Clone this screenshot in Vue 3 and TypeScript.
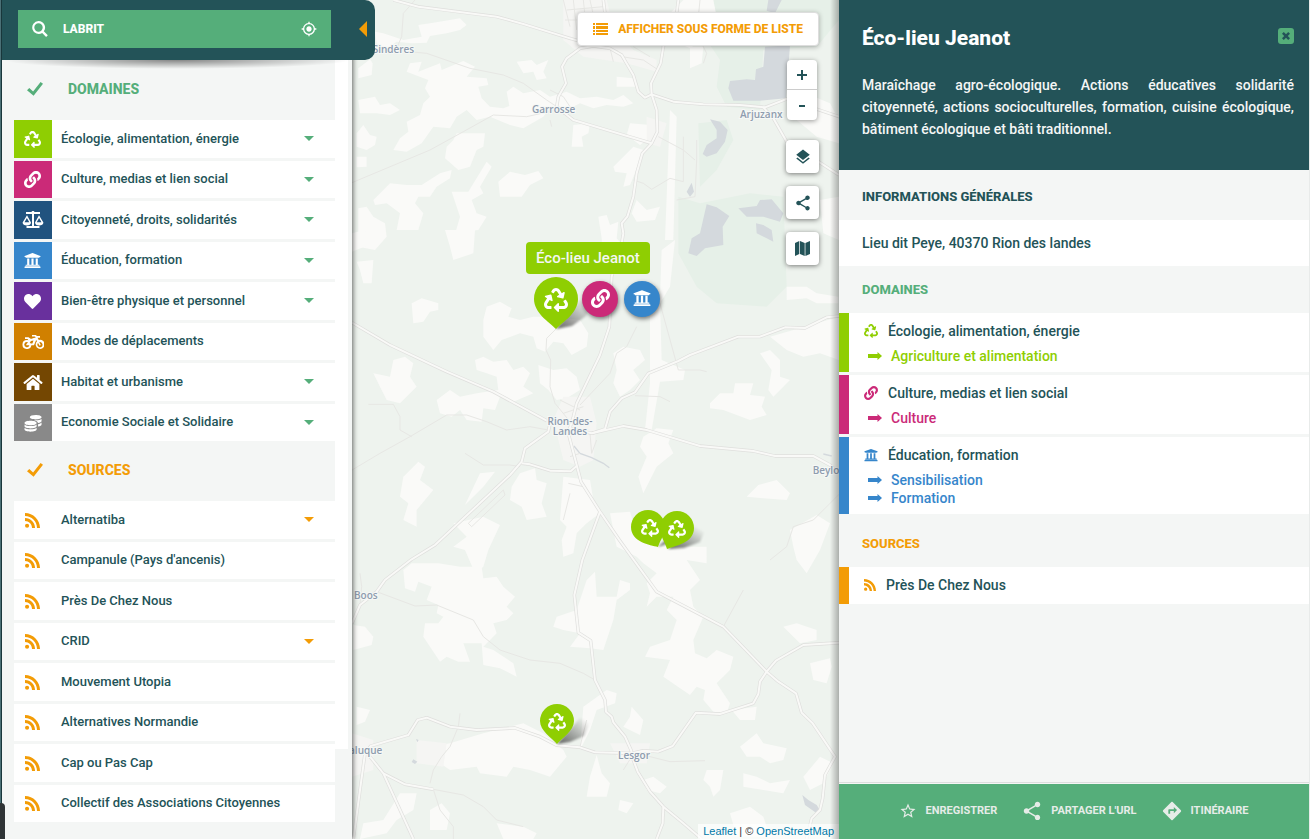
<script setup lang="ts">
import { ref } from 'vue'

interface Category {
  name: string
  icon: string
  color: string
  expandable: boolean
}
interface Source {
  name: string
  expandable: boolean
}
interface PlaceDomain {
  name: string
  icon: string
  color: string
  children: string[]
}

const query = ref('LABRIT')
const domainsOn = ref(true)
const sourcesOn = ref(true)

const icons: Record<string, { box: string; d: string }> = {
  recycle: {
    box: '0 0 512 512',
    d: 'M184.561 261.903c3.232 13.997-12.123 24.635-24.068 17.168l-40.736-25.455-50.867 81.402C55.606 356.273 70.96 384 96.012 384H148c6.627 0 12 5.373 12 12v40c0 6.627-5.373 12-12 12H96.115c-75.334 0-121.302-83.048-81.408-146.88l50.822-81.388-40.725-25.448c-12.081-7.547-8.966-25.961 4.879-29.158l110.237-25.45c8.611-1.988 17.201 3.381 19.189 11.99l25.452 110.237zm98.561-182.915l41.289 66.076-40.74 25.457c-12.051 7.528-9 25.953 4.879 29.158l110.237 25.45c8.672 1.999 17.215-3.438 19.189-11.99l25.45-110.237c3.197-13.844-11.99-24.719-24.068-17.168l-40.687 25.424-41.263-66.082c-37.521-60.033-125.209-60.171-162.816 0l-17.963 28.766c-3.51 5.62-1.8 13.021 3.82 16.533l33.919 21.195c5.62 3.512 13.024 1.803 16.536-3.817l17.961-28.743c12.712-20.341 41.973-19.676 54.257-.022zM497.288 301.12l-27.515-44.065c-3.511-5.623-10.916-7.334-16.538-3.821l-33.861 21.159c-5.62 3.512-7.33 10.915-3.818 16.536l27.564 44.112c13.257 21.211-2.057 48.96-27.136 48.96H320V336.02c0-14.213-17.242-21.383-27.313-11.313l-80 79.981c-6.249 6.248-6.249 16.379 0 22.627l80 79.989C302.689 517.308 320 510.3 320 495.989V448h95.88c75.274 0 121.335-82.997 81.408-146.88z',
  },
  link: {
    box: '0 0 512 512',
    d: 'M326.612 185.391c59.747 59.809 58.927 155.698.36 214.59-.11.12-.24.25-.36.37l-67.2 67.2c-59.27 59.27-155.699 59.262-214.96 0-59.27-59.26-59.27-155.7 0-214.96l37.106-37.106c9.84-9.84 26.786-3.3 27.294 10.606.648 17.722 3.826 35.527 9.69 52.721 1.986 5.822.567 12.262-3.783 16.612l-13.087 13.087c-28.026 28.026-28.905 73.66-1.155 101.96 28.024 28.579 74.086 28.749 102.325.51l67.2-67.19c28.191-28.191 28.073-73.757 0-101.83-3.701-3.694-7.429-6.564-10.341-8.569a16.037 16.037 0 0 1-6.947-12.606c-.396-10.567 3.348-21.456 11.698-29.806l21.054-21.055c5.521-5.521 14.182-6.199 20.584-1.731a152.482 152.482 0 0 1 20.522 17.197zM467.547 44.449c-59.261-59.262-155.69-59.27-214.96 0l-67.2 67.2c-.12.12-.25.25-.36.37-58.566 58.892-59.387 154.781.36 214.59a152.454 152.454 0 0 0 20.521 17.196c6.402 4.468 15.064 3.789 20.584-1.731l21.054-21.055c8.35-8.35 12.094-19.239 11.698-29.806a16.037 16.037 0 0 0-6.947-12.606c-2.912-2.005-6.64-4.875-10.341-8.569-28.073-28.073-28.191-73.639 0-101.83l67.2-67.19c28.239-28.239 74.3-28.069 102.325.51 27.75 28.3 26.872 73.934-1.155 101.96l-13.087 13.087c-4.35 4.35-5.769 10.79-3.783 16.612 5.864 17.194 9.042 34.999 9.69 52.721.509 13.906 17.454 20.446 27.294 10.606l37.106-37.106c59.271-59.259 59.271-155.699.001-214.959z',
  },
  institution: {
    box: '0 0 512 512',
    d: 'M496 128v16a8 8 0 0 1-8 8h-24v12c0 6.627-5.373 12-12 12H60c-6.627 0-12-5.373-12-12v-12H24a8 8 0 0 1-8-8v-16a8 8 0 0 1 4.941-7.392l232-88a7.996 7.996 0 0 1 6.118 0l232 88A8 8 0 0 1 496 128zm-24 304H40c-13.255 0-24 10.745-24 24v16a8 8 0 0 0 8 8h464a8 8 0 0 0 8-8v-16c0-13.255-10.745-24-24-24zM96 192v192H60c-6.627 0-12 5.373-12 12v20h416v-20c0-6.627-5.373-12-12-12h-36V192h-64v192h-64V192h-64v192h-64V192H96z',
  },
  heart: {
    box: '0 0 512 512',
    d: 'M462.3 62.6C407.5 15.9 326 24.3 275.7 76.2L256 96.5l-19.7-20.3C186.1 24.3 104.5 15.9 49.7 62.6c-62.8 53.6-66.1 149.8-9.9 207.9l193.5 199.8c12.5 12.9 32.8 12.9 45.3 0l193.5-199.8c56.3-58.1 53-154.3-9.8-207.9z',
  },
  home: {
    box: '0 0 576 512',
    d: 'M280.37 148.26L96 300.11V464a16 16 0 0 0 16 16l112.06-.29a16 16 0 0 0 15.92-16V368a16 16 0 0 1 16-16h64a16 16 0 0 1 16 16v95.64a16 16 0 0 0 16 16.05L464 480a16 16 0 0 0 16-16V300L295.67 148.26a12.19 12.19 0 0 0-15.3 0zM571.6 251.47L488 182.56V44.05a12 12 0 0 0-12-12h-56a12 12 0 0 0-12 12v72.61L318.47 43a48 48 0 0 0-61 0L4.34 251.47a12 12 0 0 0-1.6 16.9l25.5 31A12 12 0 0 0 45.15 301l235.22-193.74a12.19 12.19 0 0 1 15.3 0L530.9 301a12 12 0 0 0 16.9-1.6l25.5-31a12 12 0 0 0-1.7-16.93z',
  },
  balance: {
    box: '0 0 22 18',
    d: 'M4 1h5.500a1.600 1.600 0 0 1 3 0H18v2h-6v12h5.500v2h-13v-2H10V3H4zM5 4.200 9 11.500C9 13.600 7.200 14.500 4.800 14.500S.6 13.600.6 11.500zM4.900 6.900 2.500 11.300h4.800zM17 4.200 21.400 11.500c0 2.100-1.800 3-4.200 3S13 13.600 13 11.500zM17.100 6.900 14.700 11.300h4.800z',
  },
  motorbike: {
    box: '0 0 22 14',
    d: 'M5 5a4.500 4.500 0 1 0 4.400 5.300H12L14.200 5l.8 1.200A4.500 4.500 0 1 0 16.800 5.100L15.500 2.800H18V1h-3.100l-1-1H10v1.600h3l.7 1.200c-2.200-.3-3.300 1.100-5 1L6.500 2.300H3V4h2.500l1 1.200A4 4 0 0 0 5 5zm0 2 1 .2-1.700 2v1.100h3.100A2.600 2.600 0 1 1 5 7zm2.700 1.100 1.200-2.200 2.600-.3-1.100 2.900H9.300zM16 8l1.600 2.700 1.200-.7-1.500-2.800A2.600 2.600 0 1 1 16 8z',
  },
  coins: {
    box: '0 0 20 20',
    d: 'M13 1.200c3.600 0 6.500 1 6.500 2.400S16.600 6 13 6 6.500 5 6.500 3.600 9.400 1.200 13 1.200zM19.500 5.500v2.300c0 1-1.600 1.800-4 2.200-.2-1.500-1.900-2.500-4.500-3.100l2 .1c3 0 5.500-.6 6.500-1.500zM19.500 9.500v2.300c0 1-1.500 1.800-3.900 2.200v-2.600c1.800-.4 3.200-1 3.900-1.900zM7.300 7.400c3.700 0 6.700 1 6.700 2.500s-3 2.500-6.700 2.500S.6 11.400.6 9.900s3-2.500 6.700-2.500zM.6 11.600c1.200 1.200 3.700 1.800 6.700 1.800s5.500-.6 6.700-1.800v2c0 1.400-3 2.400-6.700 2.400S.6 15 .6 13.600zM.6 15.200c1.200 1.200 3.700 1.800 6.700 1.800s5.500-.6 6.700-1.800v2c0 1.400-3 2.400-6.700 2.400s-6.700-1-6.700-2.400z',
  },
  rss: {
    box: '0 0 16 16',
    d: 'M2.200 11.400a2.200 2.200 0 1 1 0 4.400 2.200 2.200 0 0 1 0-4.400zM0 5.300C6 5.300 10.700 10 10.700 16H7.500C7.500 11.900 4.100 8.500 0 8.500zM0 0c8.800 0 16 7.200 16 16h-3.200C12.800 9 7 3.200 0 3.200z',
  },
  search: {
    box: '0 0 16 16',
    d: 'M6.500 0a6.500 6.500 0 0 1 5.300 10.300l4 4-1.700 1.600-3.900-3.900A6.500 6.500 0 1 1 6.500 0zm0 2.300a4.200 4.200 0 1 0 0 8.400 4.200 4.200 0 0 0 0-8.400z',
  },
  locate: {
    box: '0 0 24 24',
    d: 'M12 8c-2.210 0-4 1.790-4 4s1.790 4 4 4 4-1.790 4-4-1.790-4-4-4zm8.940 3c-.46-4.170-3.770-7.480-7.940-7.940V1h-2v2.060C6.830 3.520 3.520 6.830 3.060 11H1v2h2.060c.46 4.170 3.770 7.480 7.940 7.940V23h2v-2.060c4.170-.46 7.480-3.770 7.940-7.940H23v-2h-2.060zM12 19c-3.870 0-7-3.130-7-7s3.130-7 7-7 7 3.130 7 7-3.130 7-7 7z',
  },
  check: { box: '0 0 16 14', d: 'M0 8.200 2.300 6l3.800 3.600L13.600 0 16 1.700 6.600 13.700z' },
  caret: { box: '0 0 10 5', d: 'M0 0h10L5 5z' },
  list: {
    box: '0 0 15 12',
    d: 'M0 0h2v2H0zM3 0h12v2H3zM0 3h2v3H0zM3 3h12v3H3zM0 7h2v2H0zM3 7h12v2H3zM0 10h2v2H0zM3 10h12v2H3z',
  },
  layers: {
    box: '0 0 24 24',
    d: 'M11.990 18.540l-7.370-5.730L3 14.070l9 7 9-7-1.630-1.270-7.380 5.740zM12 16l7.360-5.730L21 9l-9-7-9 7 1.630 1.270L12 16z',
  },
  share: {
    box: '0 0 24 24',
    d: 'M18 16.080c-.76 0-1.440.3-1.960.77L8.910 12.700c.05-.23.09-.46.09-.7s-.04-.47-.09-.7l7.050-4.110c.54.5 1.250.81 2.040.81 1.660 0 3-1.340 3-3s-1.340-3-3-3-3 1.340-3 3c0 .24.04.47.09.7L8.040 9.810C7.500 9.310 6.790 9 6 9c-1.660 0-3 1.340-3 3s1.340 3 3 3c.79 0 1.500-.31 2.040-.81l7.120 4.160c-.05.21-.08.43-.08.65 0 1.610 1.310 2.920 2.920 2.920 1.610 0 2.920-1.310 2.920-2.920s-1.310-2.920-2.920-2.920z',
  },
  map: { box: '0 0 15 15', d: 'M0 2 4.300 0v13L0 15zM5 0l4.700 2v13L5 13zM10.400 2 15 0v13l-4.600 2z' },
  star: {
    box: '0 0 24 24',
    d: 'M22 9.240l-7.190-.62L12 2 9.190 8.630 2 9.240l5.460 4.730L5.820 21 12 17.270 18.180 21l-1.630-7.030L22 9.240zM12 15.400l-3.760 2.270 1-4.280-3.320-2.880 4.380-.38L12 6.100l1.710 4.040 4.380.38-3.320 2.880 1 4.280L12 15.400z',
  },
  directions: {
    box: '0 0 24 24',
    d: 'M21.710 11.290l-9-9c-.39-.39-1.020-.39-1.410 0l-9 9c-.39.39-.39 1.020 0 1.410l9 9c.39.39 1.020.39 1.410 0l9-9c.39-.38.39-1.010 0-1.410zM14 14.500V12h-4v3H8v-4c0-.55.45-1 1-1h5V7.500l3.500 3.500-3.500 3.500z',
  },
  arrow: { box: '0 0 14 8', d: 'M0 2h9.500V0L14 4 9.500 8V6H0z' },
  cross: { box: '0 0 8 8', d: 'M1.800 0 4 2.200 6.200 0 8 1.800 5.800 4 8 6.200 6.200 8 4 5.800 1.800 8 0 6.200 2.200 4 0 1.800z' },
}

const categories: Category[] = [
  { name: 'Écologie, alimentation, énergie', icon: 'recycle', color: '#8fce02', expandable: true },
  { name: 'Culture, medias et lien social', icon: 'link', color: '#cb2a78', expandable: true },
  { name: 'Citoyenneté, droits, solidarités', icon: 'balance', color: '#21537f', expandable: true },
  { name: 'Éducation, formation', icon: 'institution', color: '#3686cb', expandable: true },
  { name: 'Bien-être physique et personnel', icon: 'heart', color: '#69309d', expandable: true },
  { name: 'Modes de déplacements', icon: 'motorbike', color: '#d08000', expandable: false },
  { name: 'Habitat et urbanisme', icon: 'home', color: '#744702', expandable: true },
  { name: 'Economie Sociale et Solidaire', icon: 'coins', color: '#898989', expandable: true },
]

const sources: Source[] = [
  { name: 'Alternatiba', expandable: true },
  { name: "Campanule (Pays d'ancenis)", expandable: false },
  { name: 'Près De Chez Nous', expandable: false },
  { name: 'CRID', expandable: true },
  { name: 'Mouvement Utopia', expandable: false },
  { name: 'Alternatives Normandie', expandable: false },
  { name: 'Cap ou Pas Cap', expandable: false },
  { name: 'Collectif des Associations Citoyennes', expandable: false },
]

const placeDomains: PlaceDomain[] = [
  { name: 'Écologie, alimentation, énergie', icon: 'recycle', color: '#8fce02', children: ['Agriculture et alimentation'] },
  { name: 'Culture, medias et lien social', icon: 'link', color: '#cb2a78', children: ['Culture'] },
  { name: 'Éducation, formation', icon: 'institution', color: '#3686cb', children: ['Sensibilisation', 'Formation'] },
]

const tools = [
  { icon: 'layers', label: 'Fonds de carte' },
  { icon: 'share', label: 'Partager la carte' },
  { icon: 'map', label: 'Vue initiale' },
]

const actions = [
  { icon: 'star', label: 'Enregistrer' },
  { icon: 'share', label: "Partager l'URL" },
  { icon: 'directions', label: 'Itinéraire' },
]

const patches: string[] = [
  'M75 95 100 100 160 120 215 110 205 75 240 70 330 55 350 75 330 90 290 100 240 108 230 128 185 130 140 125 110 145 80 130z',
  'M180 190 215 185 205 215 270 190 275 210 340 183 375 200 350 230 410 235 415 255 385 260 395 295 420 320 460 325 478 318 470 275 490 260 520 280 570 270 600 290 650 275 690 295 740 290 790 300 820 285 850 310 820 320 770 315 730 325 690 310 650 330 600 320 580 350 520 385 480 375 420 350 380 360 350 330 320 350 300 385 250 380 215 430 170 455 130 450 150 415 175 395 170 365 210 345 220 310 240 290 225 265 235 240 170 215z',
  'M500 185 545 180 560 195 595 180 580 215 590 235 560 240 550 215 520 220z',
  'M25 205 60 178 68 190 65 225 25 235zM25 300 75 290 90 315 120 310 150 330 120 345 80 340 30 340z',
  'M20 400 40 375 60 405 80 410 75 435 50 450 20 440zM20 470 50 470 50 500 20 502z',
  'M320 400 405 400 400 440 380 450 360 500 325 510 285 475 290 440 310 420z',
  'M445 545 480 515 525 525 565 513 580 535 540 555 515 590 450 590zM410 485 425 500 390 560 400 580 365 600 380 640 410 650 385 690 365 692 350 720 310 720 330 650 305 575 355 575z',
  'M70 600 120 550 170 555 215 555 270 520 305 510 300 535 260 560 240 590 205 590 195 610 220 640 205 690 140 690 150 640 110 610 75 615z',
  'M25 625 50 620 70 650 105 670 110 710 75 750 25 740z',
  'M670 375 720 370 715 400 695 410 700 440 665 440zM800 230 850 235 865 260 800 260zM840 370 900 375 920 400 870 435 830 405z',
  'M790 500 850 440 880 450 855 520 840 555 820 560 830 520 795 515z',
  'M860 600 890 630 930 620 915 660 860 665 845 640zM745 650 770 645 780 675 805 665 800 715 830 750 790 810 760 790 755 715z',
  'M960 330 980 350 970 720 945 720z',
  'M1000 0 1090 0 1100 50 1080 100 1020 145 940 110 960 40zM1020 140 1060 140 1055 190 1020 205z',
  'M1310 300 1380 285 1440 310 1467 360 1467 430 1400 410 1340 360zM1410 600 1467 590 1467 720 1420 700z',
  'M285 690 375 690 370 760 310 780 300 740z',
  'M6 700 45 690 55 735 6 755zM20 785 70 780 65 850 40 850 30 810z',
  'M185 910 215 895 265 910 265 930 240 935 220 965 190 970z',
  'M400 960 410 920 450 905 485 925 475 950 510 960 550 950 610 950 690 960 715 1000 710 1040 665 1065 640 1030 610 1025 585 1055 560 1045 550 1010 510 1000 455 1020 430 1050 400 1010z',
  'M70 1120 120 1130 130 1080 165 1070 190 1090 180 1130 200 1160 150 1210 110 1200 90 1160z',
  'M375 1080 400 1070 430 1085 470 1080 490 1110 520 1100 540 1120 520 1160 550 1180 490 1205 450 1190 435 1230 400 1225 395 1265 350 1260 330 1230 305 1250 270 1240 260 1200 300 1170 330 1190 380 1180 445 1170 440 1130 410 1120 380 1110z',
  'M565 1095 610 1110 650 1105 680 1130 690 1170 650 1195 620 1200 595 1170 570 1150z',
  'M790 1060 820 1040 870 1050 885 1080 850 1110 870 1140 840 1170 810 1190 790 1150 800 1110z',
  'M935 750 975 720 960 860 930 910 935 1080 1005 1110 1000 1140 930 1145 905 1290 885 1290 900 1150 900 950 930 890z',
  'M1260 1010 1330 990 1467 950 1467 1080 1410 1060 1360 1070 1310 1050z',
  'M1310 860 1370 860 1400 880 1465 890 1465 910 1400 910 1370 895 1310 900z',
  'M1080 1210 1110 1180 1150 1180 1155 1150 1210 1150 1200 1185 1245 1190 1235 1220 1250 1245 1200 1260 1120 1230 1080 1225z',
  'M1230 1060 1260 1050 1290 1080 1290 1130 1320 1140 1270 1190 1255 1170 1265 1110z',
  'M880 1310 920 1285 970 1290 955 1330 970 1360 920 1400 880 1480 865 1430 890 1370 870 1340z',
  'M160 1430 205 1385 225 1400 210 1440 250 1470 200 1530 200 1580 160 1560 175 1510 150 1490z',
  'M390 1420 435 1415 400 1460 345 1515zM485 1460 510 1420 555 1405 560 1440 590 1450 575 1510 590 1550 530 1560 515 1520 480 1500z',
  'M640 1430 720 1440 730 1500 750 1540 710 1570 680 1600 670 1660 640 1670 635 1620 650 1580 630 1560z',
  'M1225 1455 1280 1440 1320 1480 1310 1500 1240 1495 1190 1490zM1320 1590 1400 1545 1440 1570 1410 1650 1370 1720 1340 1680 1330 1640z',
  'M310 1570 400 1550 450 1575 415 1650 400 1700 375 1720 345 1650 310 1640 350 1610z',
  'M160 1710 185 1690 225 1690 265 1690 330 1700 395 1700 400 1735 440 1730 460 1760 495 1790 470 1820 490 1840 470 1860 430 1870 440 1900 400 1940 430 1950 490 1990 500 2030 450 2005 400 1995 395 1930 340 1930 360 1985 325 1985 290 1970 270 1985 220 1910 225 1870 265 1870 280 1850 260 1840 265 1815 230 1800 245 1760 205 1745 195 1775 165 1765z',
  'M10 1875 45 1880 70 1910 65 1935 10 1950zM60 2130 45 2165 20 2175 20 2120z',
  'M780 1540 840 1535 860 1600 930 1640 1070 1640 1070 1690 1010 1680 1050 1740 1020 1770 1030 1820 1060 1850 1030 1920 1035 1960 1070 1975 1100 1950 1150 1970 1140 2010 1100 2050 1140 2110 1130 2140 1090 2135 1060 2100 1065 2070 1040 2060 1020 2085 940 2030 960 1980 885 1970 900 1940 960 1920 980 1860 950 1830 970 1790 920 1790 890 1820 900 1780 890 1750 920 1720 880 1690 860 1670 800 1640z',
  'M710 1740 735 1715 740 1790 800 1790 810 1740 840 1750 840 1770 800 1800 790 1860 760 1950 720 1945 660 1940 690 1900 640 1890 610 1880 620 1850 680 1830z',
  'M200 2250 300 2230 400 2200 520 2170 580 2200 640 2250 650 2270 600 2330 540 2310 490 2300 470 2330 390 2320 380 2300 300 2310 270 2290 290 2250z',
  'M740 2265 755 2320 780 2350 770 2390 710 2390 720 2330zM700 2120 770 2070 800 2080 795 2110 740 2130 720 2190 690 2250z',
  'M845 2120 880 2160 870 2205 820 2180 840 2150zM1070 2310 1120 2310 1110 2370 1090 2390 1080 2360 1060 2340z',
  'M1170 2240 1220 2200 1240 2230 1310 2245 1300 2280 1260 2290 1230 2270 1190 2270zM1180 2320 1220 2330 1260 2350 1320 2340 1300 2380 1240 2370 1180 2360z',
  'M1145 2130 1220 2120 1215 2160 1170 2160zM1300 1880 1340 1870 1400 1890 1400 1920 1350 1930z',
  'M1380 1990 1440 1975 1445 2000 1430 2050 1390 2040zM1360 2330 1410 2270 1450 2290 1420 2350 1380 2370z',
  'M1140 2440 1200 2420 1240 2450 1260 2510 1160 2510zM440 2470 520 2480 560 2500 550 2517 460 2517zM150 2380 200 2380 190 2430 140 2460 110 2500 30 2517 40 2470 100 2460z',
  'M240 2430 275 2410 300 2440 290 2490 240 2490zM810 2400 850 2410 830 2440 805 2430zM880 2340 910 2330 950 2360 930 2380 890 2370z',
]

const roads: string[] = [
  'M130 0 205 20 440 50 520 72 660 115 740 138',
  'M620 320 625 290 648 250 636 200 650 175 690 145 730 138 780 145 815 165 850 225 865 275 885 293 905 283',
  'M760 0 765 40',
  'M985 0 980 40 940 140 932 190 903 250 905 283 920 330 922 395 905 430 877 460 860 520 850 590 832 650 815 670 820 700 815 730 785 830 778 980 750 1065 680 1210 670 1250 655 1300 680 1395 693 1445 750 1535 808 1620 920 1775 1120 1880 1250 2015 1285 2045 1338 2080 1355 2138 1388 2170 1455 2270 1425 2325 1418 2395 1410 2430 1385 2455 1370 2517',
  'M905 283 970 305 1060 313 1170 315 1245 322 1310 297 1467 350',
  'M1240 322 1270 355 1310 425 1405 485 1467 525',
  'M620 320 670 360 905 430',
  'M6 968 120 1035 290 1115 430 1175 590 1262',
  'M725 1300 765 1287 780 1235 815 1195 855 1177 895 1120 985 1083 1020 1065 1165 1010 1230 1010 1305 982 1365 984 1430 952 1470 948',
  'M660 1285 725 1300 820 1278 890 1290 1050 1338 1210 1353 1275 1368 1390 1368 1440 1395 1467 1420',
  'M600 1270 595 1295 525 1345 515 1385 480 1425 255 1635 185 1678 105 1740 80 1775 30 1815 6 1870',
  'M515 1390 540 1393 600 1412 662 1414 680 1398',
  'M750 1535 697 1680 673 1785 685 1898 722 1922 735 2040 765 2100 768 2135 785 2150 790 2167 825 2210 843 2250 850 2280 863 2315 900 2375 940 2420 1000 2470 1055 2517',
  'M1470 1928 1360 1935 1278 1982 1250 2015 1230 2045 1225 2082 1210 2110 1110 2142 1038 2138 968 2238 925 2255 880 2252 845 2260 735 2257 690 2242 620 2236 570 2210 495 2184 380 2190 300 2180 230 2153 203 2160 175 2205 62 2238 45 2260 10 2517',
  'M60 2270 100 2320 190 2517',
  'M100 2320 165 2353 250 2368',
  'M940 2420 938 2470 920 2517',
]

const lanes: string[] = [
  'M75 145 230 160 360 205 460 225 520 250 590 300 620 320',
  'M195 0 160 40 155 110 140 145',
  'M6 548 240 450 340 395 430 345 530 350 620 330',
  'M600 360 605 380M600 270 640 290 660 320 640 345',
  'M1050 0 1040 100 1070 160 1060 190M1040 420 1040 480 1035 590 980 600',
  'M925 410 1000 450 1035 480M850 540 880 550 905 568 960 535 1000 545 1000 410',
  'M6 1410 90 1360 180 1310 290 1245 350 1245 410 1265 470 1290 540 1280 595 1290',
  'M55 1213 130 1213 150 1250 150 1290 185 1310',
  'M620 985 590 1015 588 1050 602 1080 600 1160 615 1210 660 1265',
  'M860 980 830 1040 800 1060 780 1120 690 1215M855 1187 930 1190 960 1205',
  'M930 910 985 1110 1050 1110 1070 1115',
  'M345 1360 400 1395 480 1395 510 1400M355 1570 460 1470 465 1485 365 1580 355 1570',
  'M80 1775 195 1818 260 1815 370 1860 400 1910 450 1950 540 1980 630 1990 700 2020 735 2040',
  'M1470 1480 1390 1560 1330 1580 1310 1640 1260 1680M1180 1770 1120 1880',
  'M240 2350 250 2310 275 2270 300 2240 325 2180 330 2140M250 2368 340 2385 400 2420 440 2460 520 2480',
  'M710 2160 690 2240M860 2260 960 2285 1065 2282M250 2368 270 2430 310 2480 310 2517',
  'M30 1720 35 1760 30 1815M820 2310 845 2270M6 2250 45 2260',
  'M640 0 660 80M670 0 680 90M700 0 710 95M650 30 760 20M645 60 770 60M720 0 740 90 790 80',
  'M780 145 790 185M800 150 830 195M815 170 880 180 925 210M850 140 900 170',
  'M630 1200 690 1230M640 1240 700 1220M720 1300 725 1360 740 1320M690 1360 660 1370M655 1450 700 1460M660 1480 640 1560',
]
</script>

<template>
  <div class="app">
    <div class="edge" aria-hidden="true"><span class="edge-tab"></span></div>

    <aside class="filters">
      <header class="searchbar">
        <form class="search" role="search" @submit.prevent>
          <button class="bare" type="submit" aria-label="Rechercher">
            <svg class="i16" :viewBox="icons.search.box"><path :d="icons.search.d" /></svg>
          </button>
          <input v-model="query" class="search-input" type="text" aria-label="Lieu" />
          <button class="bare" type="button" aria-label="Me localiser">
            <svg class="i16" :viewBox="icons.locate.box"><path :d="icons.locate.d" /></svg>
          </button>
        </form>
        <button class="bare collapse" type="button" aria-label="Replier le menu">
          <svg class="collapse-icon" viewBox="0 0 8 16"><path d="M8 0v16L0 8z" /></svg>
        </button>
      </header>

      <div class="filter-body">
        <div class="filter-list">
          <label class="section green">
            <input v-model="domainsOn" class="tick" type="checkbox" />
            <svg class="section-check" :viewBox="icons.check.box"><path :d="icons.check.d" /></svg>
            <span>DOMAINES</span>
          </label>
          <ul class="rows">
            <li v-for="c in categories" :key="c.name" class="row">
              <span class="tile" :style="{ background: c.color }">
                <svg :class="['tile-icon', c.icon]" :viewBox="icons[c.icon].box">
                  <path :d="icons[c.icon].d" fill-rule="evenodd" />
                </svg>
              </span>
              <button class="row-name" type="button">{{ c.name }}</button>
              <svg v-if="c.expandable" class="caret green" :viewBox="icons.caret.box"><path :d="icons.caret.d" /></svg>
            </li>
          </ul>
          <label class="section orange">
            <input v-model="sourcesOn" class="tick" type="checkbox" />
            <svg class="section-check" :viewBox="icons.check.box"><path :d="icons.check.d" /></svg>
            <span>SOURCES</span>
          </label>
          <ul class="rows">
            <li v-for="s in sources" :key="s.name" class="row">
              <span class="tile orange">
                <svg class="tile-icon rss" :viewBox="icons.rss.box"><path :d="icons.rss.d" /></svg>
              </span>
              <button class="row-name" type="button">{{ s.name }}</button>
              <svg v-if="s.expandable" class="caret orange" :viewBox="icons.caret.box"><path :d="icons.caret.d" /></svg>
            </li>
          </ul>
        </div>
        <div class="track" aria-hidden="true"><span class="thumb"></span></div>
      </div>
    </aside>

    <main class="map">
      <svg class="tiles" viewBox="6 0 1461 2517" preserveAspectRatio="xMidYMid slice">
        <rect x="-2000" y="-1000" width="6000" height="5000" fill="#eef3ee" />
        <g fill="#e6f0e8">
          <path d="M1090 0 1467 0 1467 60 1400 140 1240 150 1230 330 1130 320 1100 260 1110 180 1070 120z" />
          <path d="M1045 370 1130 360 1150 420 1100 510 1050 560z" />
          <path d="M985 590 1050 610 1200 580 1300 590 1310 860 1250 920 1100 910 1040 860 985 760z" />
        </g>
        <g fill="#fafaf8">
          <path v-for="(p, n) in patches" :key="n" :d="p" />
        </g>
        <path
          fill="#f5f5f3"
          d="M640 0 770 0 790 80 850 150 920 180 920 215 830 190 700 170 640 120zM640 1190 720 1190 740 1270 730 1380 690 1400 640 1380 610 1260zM6 2200 70 2220 70 2310 6 2330zM780 2230 900 2230 890 2290 810 2290zM200 2220 290 2230 280 2300 200 2290zM890 350 950 370 930 440 890 430z"
        />
        <g fill="#d4d9dd">
          <path d="M1255 0 1295 0 1275 40 1250 32zM1245 140 1320 136 1308 295 1230 302 1150 302 1135 265 1140 243 1190 238 1215 240 1218 208 1240 200z" />
          <path d="M1080 358 1110 365 1133 390 1125 425 1100 460 1070 470 1058 462 1070 435 1100 415 1100 390z" />
          <path d="M1025 548 1032 575 1020 590 1010 575zM1070 613 1100 622 1138 648 1118 680 1120 735 1065 745 1040 768 1015 760 1025 715 1050 700z" />
          <path d="M1165 625 1220 618 1230 600 1265 598 1300 640 1290 665 1240 650 1190 650zM1218 670 1240 675 1265 690 1270 725 1250 715 1220 700z" />
          <path d="M1357 2385 1375 2400 1400 2415 1408 2428 1400 2440 1365 2415zM190 2278 202 2285 195 2292 185 2286zM198 2217 206 2220 202 2227z" />
        </g>
        <path fill="none" stroke="#d4d9dd" stroke-width="4" d="M672 1338 690 1360 725 1373 760 1390 778 1403M1420 1362 1445 1368" />
        <g fill="none" stroke="#e7e7e4" stroke-width="3" stroke-linejoin="round">
          <path v-for="(p, n) in lanes" :key="n" :d="p" />
        </g>
        <g fill="none" stroke="#dfdfdd" stroke-width="10" stroke-linejoin="round">
          <path v-for="(p, n) in roads" :key="n" :d="p" />
        </g>
        <g fill="none" stroke="#f9f9f7" stroke-width="6" stroke-linejoin="round">
          <path v-for="(p, n) in roads" :key="n" :d="p" />
        </g>
        <g class="town">
          <text x="68" y="160">Sindères</text>
          <text x="546" y="340">Garrosse</text>
          <text x="1170" y="353">Arjuzanx</text>
          <text x="660" y="1275" text-anchor="middle">Rion-des-</text>
          <text x="660" y="1305" text-anchor="middle">Landes</text>
          <text x="1388" y="1422">Beylongue</text>
          <text x="12" y="1796">Boos</text>
          <text x="97" y="2262" text-anchor="end">Laluque</text>
          <text x="804" y="2277">Lesgor</text>
        </g>
      </svg>

      <div class="pins">
        <svg class="pin-layer" viewBox="352 0 487 839" preserveAspectRatio="xMidYMid slice" role="img" aria-label="Lieux">
          <defs>
            <linearGradient id="cast" x1="0" y1="1" x2="1" y2="0">
              <stop offset="0" stop-color="#000" stop-opacity="0.6" />
              <stop offset="0.9" stop-color="#000" stop-opacity="0" />
            </linearGradient>
          </defs>
          <g class="cast" fill="url(#cast)">
            <path d="M556 329 580 300 592 302 586 316 572 326z" />
            <path d="M658 547 682 525 690 535z" />
            <path d="M668 549 694 526 704 532 700 542 684 548z" />
            <path d="M557 744 580 718 590 722 584 736 570 742z" />
          </g>
          <g fill="#8fce02">
            <path d="M556 329C549 322 534 313 534 299a22 22 0 0 1 44 0c0 14-15 23-22 30z" />
            <path d="M658 547C650 545 631 542 631 527a17 17 0 0 1 34 0c0 8-5 13-7 20z" />
            <path d="M667 549C665 542 660 536 660 528a17 17 0 0 1 34 0c0 15-19 18-27 21z" />
            <path d="M557 744C552 738 540 731 540 721a17 17 0 0 1 34 0c0 10-12 17-17 23z" />
          </g>
          <circle class="disc" cx="600" cy="299" r="18" fill="#cb2a78" />
          <circle class="disc" cx="642" cy="299" r="18" fill="#3686cb" />
          <g class="glyphs">
            <svg x="544" y="288" width="24" height="24" :viewBox="icons.recycle.box"><path :d="icons.recycle.d" /></svg>
            <svg x="591" y="289" width="19" height="19" :viewBox="icons.link.box"><path :d="icons.link.d" /></svg>
            <svg x="633" y="289" width="18" height="18" :viewBox="icons.institution.box"><path :d="icons.institution.d" /></svg>
            <svg x="641" y="519" width="18" height="18" :viewBox="icons.recycle.box"><path :d="icons.recycle.d" /></svg>
            <svg x="668" y="520" width="18" height="18" :viewBox="icons.recycle.box"><path :d="icons.recycle.d" /></svg>
            <svg x="548" y="713" width="18" height="18" :viewBox="icons.recycle.box"><path :d="icons.recycle.d" /></svg>
          </g>
        </svg>
        <span class="pin-label">Éco-lieu Jeanot</span>
      </div>

      <div class="controls">
        <button class="list-button" type="button">
          <svg class="list-icon" :viewBox="icons.list.box"><path :d="icons.list.d" /></svg>
          AFFICHER SOUS FORME DE LISTE
        </button>
        <div class="zoom">
          <button type="button" aria-label="Zoom avant">
            <svg class="zoom-icon" viewBox="0 0 10 10"><path d="M4 0h2v4h4v2H6v4H4V6H0V4h4z" /></svg>
          </button>
          <button type="button" aria-label="Zoom arrière">
            <svg class="zoom-icon" viewBox="0 0 10 10"><path d="M2 5h6v2H2z" /></svg>
          </button>
        </div>
        <button v-for="t in tools" :key="t.icon" class="tool" type="button" :aria-label="t.label">
          <svg :class="t.icon === 'map' ? 'i15' : 'i18'" :viewBox="icons[t.icon].box"><path :d="icons[t.icon].d" /></svg>
        </button>
      </div>

      <p class="credit"><a href="#leaflet">Leaflet</a> | © <a href="#osm">OpenStreetMap</a></p>
    </main>

    <aside class="place">
      <header class="place-head">
        <div class="place-title">
          <h1>Éco-lieu Jeanot</h1>
          <button class="close" type="button" aria-label="Fermer">
            <svg class="close-icon" :viewBox="icons.cross.box"><path :d="icons.cross.d" /></svg>
          </button>
        </div>
        <p>
          Maraîchage agro-écologique. Actions éducatives solidarité citoyenneté, actions socioculturelles, formation,
          cuisine écologique, bâtiment écologique et bâti traditionnel.
        </p>
      </header>

      <div class="place-body">
        <h2 class="info">INFORMATIONS GÉNÉRALES</h2>
        <address>Lieu dit Peye, 40370 Rion des landes</address>
        <h2 class="green">DOMAINES</h2>
        <section v-for="d in placeDomains" :key="d.name" class="card" :style="{ borderColor: d.color, color: d.color }">
          <h3>
            <svg class="i14" :viewBox="icons[d.icon].box"><path :d="icons[d.icon].d" /></svg>
            <span>{{ d.name }}</span>
          </h3>
          <ul>
            <li v-for="k in d.children" :key="k">
              <svg class="arrow" :viewBox="icons.arrow.box"><path :d="icons.arrow.d" /></svg>
              {{ k }}
            </li>
          </ul>
        </section>
        <h2 class="orange sources-title">SOURCES</h2>
        <section class="card source">
          <h3>
            <svg class="i12" :viewBox="icons.rss.box"><path :d="icons.rss.d" /></svg>
            <span>Près De Chez Nous</span>
          </h3>
        </section>
      </div>

      <footer class="actions">
        <button v-for="a in actions" :key="a.icon" type="button">
          <svg :class="a.icon === 'star' ? 'i18' : 'i22'" :viewBox="icons[a.icon].box"><path :d="icons[a.icon].d" /></svg>
          <span>{{ a.label }}</span>
        </button>
      </footer>
    </aside>
  </div>
</template>

<style>
body {
  margin: 0;
  background: #f4f6f5;
}
</style>

<style scoped>
.app {
  display: flex;
  height: 100vh;
  overflow: hidden;
  font-family: Roboto, 'Liberation Sans', sans-serif;
  font-weight: 500;
  color: #235358;
}
.app *,
.app *::before,
.app *::after {
  box-sizing: border-box;
}
svg {
  display: block;
  flex: none;
  fill: currentColor;
}
button {
  margin: 0;
  padding: 0;
  border: 0;
  background: none;
  font: inherit;
  color: inherit;
  cursor: pointer;
}
h1,
h2,
h3,
p,
ul {
  margin: 0;
  padding: 0;
  list-style: none;
}
.green {
  color: #55ae7a;
}
.orange {
  color: #f39c06;
}
.i12 {
  width: 12px;
  height: 12px;
}
.i14 {
  width: 14px;
  height: 14px;
}
.i15 {
  width: 15px;
  height: 15px;
}
.i16 {
  width: 16px;
  height: 16px;
}
.i18 {
  width: 18px;
  height: 18px;
}
.i22 {
  width: 22px;
  height: 22px;
}

.edge {
  position: relative;
  z-index: 4;
  flex: none;
  width: 2px;
  background: linear-gradient(90deg, #4b7076 50%, #19373b 50%);
}
.edge-tab {
  position: absolute;
  left: 0;
  bottom: 0;
  width: 5px;
  height: 36px;
  border-radius: 0 4px 0 0;
  background: #2f3436;
}

.filters {
  position: relative;
  z-index: 3;
  display: flex;
  flex-direction: column;
  flex: none;
  width: 350px;
  background: #f4f6f5;
  box-shadow: 1px 0 5px rgba(0, 0, 0, 0.6);
}
.searchbar {
  position: relative;
  z-index: 1;
  display: flex;
  align-items: center;
  gap: 28px;
  flex: none;
  height: 60px;
  margin-right: -23px;
  padding: 0 8px 2px 16px;
  border-radius: 0 10px 10px 0;
  background: #235358;
}
.searchbar::after {
  content: '';
  position: absolute;
  top: 100%;
  left: 0;
  width: 350px;
  height: 9px;
  background: radial-gradient(ellipse at top, rgba(0, 0, 0, 0.45), rgba(0, 0, 0, 0) 70%);
}
.search {
  display: flex;
  align-items: center;
  flex: 1;
  height: 38px;
  padding: 0 14px;
  background: #55ae7a;
  color: #fff;
}
.search-input {
  flex: 1;
  min-width: 0;
  margin: 0 15px;
  padding: 0;
  border: 0;
  outline: 0;
  background: none;
  color: #fff;
  font: 800 12px/18px Roboto, sans-serif;
}
.collapse {
  color: #f39c06;
}
.collapse-icon {
  width: 8px;
  height: 16px;
}
.filter-body {
  display: flex;
  flex: 1;
  min-height: 0;
  padding: 0 4px 0 12px;
  overflow: hidden;
}
.filter-list {
  flex: 1;
}
.track {
  width: 13px;
}
.thumb {
  display: block;
  height: 689px;
  background: #fff;
}
.section {
  position: relative;
  display: flex;
  align-items: center;
  gap: 25px;
  height: 60px;
  padding: 0 0 2px 13px;
  font-size: 14px;
  font-weight: 800;
}
.tick {
  position: absolute;
  opacity: 0;
}
.section-check {
  width: 16px;
  height: 14px;
}
.rows {
  display: grid;
  grid-auto-rows: 1fr;
  gap: 3px;
  min-height: 321px;
}
.row {
  display: flex;
  align-items: center;
  padding-right: 21px;
  background: #fff;
  font-size: 13px;
}
.tile {
  display: flex;
  align-items: center;
  justify-content: center;
  align-self: stretch;
  width: 38px;
  padding: 1px 1px 0 0;
  color: #fff;
}
.tile.orange {
  color: #f39c06;
}
.tile-icon {
  width: 17px;
  height: 17px;
}
.tile-icon.balance {
  width: 22px;
  height: 18px;
}
.tile-icon.motorbike {
  width: 22px;
  height: 14px;
}
.tile-icon.home {
  width: 20px;
  height: 17px;
}
.tile-icon.coins {
  width: 18px;
  height: 18px;
}
.tile-icon.rss {
  width: 15px;
  height: 15px;
}
.row-name {
  flex: 1;
  padding: 0 0 1px 9px;
  text-align: left;
}
.caret {
  width: 10px;
  height: 5px;
}

.map {
  position: relative;
  flex: 1;
  min-width: 0;
  overflow: hidden;
  background: #eef3ee;
}
.map::after {
  content: '';
  position: absolute;
  inset: 0 0 0 auto;
  width: 9px;
  background: linear-gradient(90deg, rgba(0, 0, 0, 0), rgba(0, 0, 0, 0.28));
  pointer-events: none;
}
.tiles,
.pins,
.pin-layer {
  position: absolute;
  inset: 0;
  width: 100%;
  height: 100%;
}
.town {
  fill: #8e9cae;
  stroke: #f6f8f6;
  stroke-width: 6px;
  paint-order: stroke;
  font-family: 'Open Sans', sans-serif;
  font-size: 30px;
  font-weight: 600;
}
.cast {
  filter: blur(1px);
}
.disc {
  filter: drop-shadow(1px 2px 2px rgba(0, 0, 0, 0.5));
}
.glyphs svg {
  fill: #fff;
}
.pin-label {
  position: absolute;
  top: 242px;
  left: 174px;
  padding: 0 10px;
  border-radius: 4px;
  background: #8fce02;
  color: #f4f6f5;
  font-size: 15px;
  line-height: 32px;
  white-space: nowrap;
}
.controls {
  position: absolute;
  top: 12px;
  right: 20px;
  display: flex;
  flex-direction: column;
  align-items: flex-end;
  gap: 13px;
}
.list-button {
  display: flex;
  align-items: center;
  gap: 10px;
  height: 34px;
  padding: 0 15px;
  border: 1px solid #ddd;
  border-radius: 4px;
  background: #fff;
  box-shadow: 0 1px 5px rgba(0, 0, 0, 0.3);
  color: #f39c06;
  font-size: 12px;
  font-weight: 800;
  white-space: nowrap;
}
.list-icon {
  width: 15px;
  height: 12px;
}
.zoom {
  width: 30px;
  margin: 1px 2px 7px 0;
  border-radius: 4px;
  background: #fff;
  box-shadow: 0 1px 5px rgba(0, 0, 0, 0.4);
}
.zoom button {
  display: flex;
  align-items: center;
  justify-content: center;
  width: 30px;
  height: 30px;
}
.zoom button:first-child {
  border-bottom: 1px solid #ccc;
}
.zoom-icon {
  width: 10px;
  height: 10px;
}
.tool {
  display: flex;
  align-items: center;
  justify-content: center;
  width: 33px;
  height: 33px;
  border-radius: 4px;
  background: #fff;
  box-shadow: 0 1px 5px rgba(0, 0, 0, 0.5);
}
.credit {
  position: absolute;
  right: 0;
  bottom: 0;
  padding: 0 5px;
  background: rgba(255, 255, 255, 0.7);
  color: #333;
  font: 11px/15px 'Liberation Sans', Arial, sans-serif;
}
.credit a {
  color: #0078a8;
  text-decoration: none;
}

.place {
  position: relative;
  z-index: 2;
  display: flex;
  flex-direction: column;
  flex: none;
  width: 471px;
  border-right: 1px solid #e8ebea;
  background: #f4f6f5;
}
.place-head {
  padding: 24px 15px 30px 23px;
  background: #235358;
  color: #f4f6f5;
}
.place-title {
  display: flex;
  justify-content: space-between;
  margin-bottom: 22px;
}
.place-title h1 {
  color: #fff;
  font-size: 21px;
  font-weight: 800;
  line-height: 28px;
}
.close {
  display: flex;
  align-items: center;
  justify-content: center;
  width: 16px;
  height: 16px;
  margin-top: 4px;
  border-radius: 3px;
  background: #55ae7a;
  color: #235358;
}
.close-icon {
  width: 8px;
  height: 8px;
}
.place-head p {
  font-size: 14px;
  line-height: 22px;
  text-align: justify;
}
.place-body {
  flex: 1;
  border-bottom: 1px solid #dcdedd;
  margin-bottom: 1px;
}
.place-body h2 {
  padding-left: 23px;
  font-size: 13px;
  font-weight: 800;
  line-height: 47px;
}
.place-body h2.info {
  padding-top: 3px;
}
.place-body h2.sources-title {
  padding-top: 6px;
}
address {
  padding-left: 23px;
  background: #fff;
  font-size: 14px;
  font-style: normal;
  line-height: 46px;
}
.card {
  padding: 9px 0 7px 15px;
  border-left: 10px solid;
  background: #fff;
}
.card + .card {
  margin-top: 3px;
}
.card.source {
  padding: 9px 0 10px 15px;
  border-color: #f39c06;
  color: #f39c06;
}
.card h3 {
  display: flex;
  align-items: center;
  gap: 10px;
  font-size: 14px;
  font-weight: 500;
  line-height: 18px;
}
.card h3 span {
  color: #235358;
}
.card ul {
  padding: 7px 0 0 4px;
}
.card li {
  display: flex;
  align-items: center;
  gap: 9px;
  font-size: 14px;
  line-height: 18px;
}
.arrow {
  width: 14px;
  height: 8px;
}
.actions {
  display: flex;
  align-items: center;
  justify-content: center;
  gap: 24px;
  height: 55px;
  padding-bottom: 2px;
  background: #55ae7a;
  color: #e6ece8;
  font-size: 11px;
  font-weight: 700;
  text-transform: uppercase;
}
.actions button {
  display: flex;
  align-items: center;
  gap: 8px;
  text-transform: inherit;
}
</style>
